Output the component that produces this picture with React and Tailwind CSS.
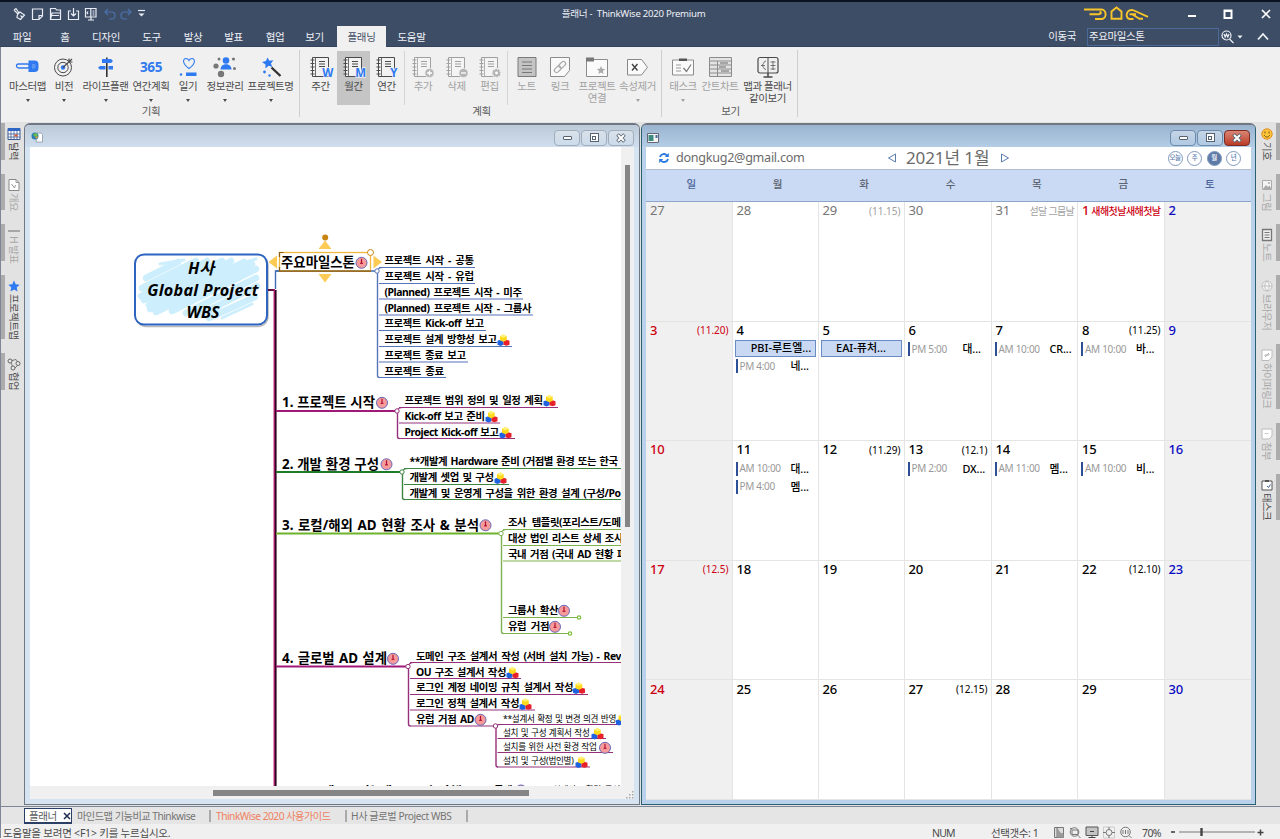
import clsx from 'clsx'

const BLUE = '#2f7af0'
const DARK = '#4a4a4a'

/* ---------- ribbon icons (all on a 28x24 canvas) ---------- */

function Icon({ children, className }) {
  return (
    <svg viewBox="0 0 28 24" className={clsx('h-6 w-7 shrink-0 overflow-visible', className)} fill="none">
      {children}
    </svg>
  )
}

function MasterMapIcon() {
  return (
    <Icon>
      <rect x="2.5" y="10" width="13" height="4" rx="2" stroke={BLUE} strokeWidth="1.3" />
      <path d="M14.500 6.500h6a4 4 0 0 1 4 4v3.500a4 4 0 0 1-4 4h-6z" fill={BLUE} />
      <path d="M18 10h2.500a1 1 0 0 1 1 1v2.500a1 1 0 0 1-1 1H18z" fill="#5a96f4" />
    </Icon>
  )
}

function VisionIcon() {
  return (
    <Icon>
      <circle cx="13" cy="13.5" r="8.500" stroke={DARK} />
      <circle cx="13" cy="13.5" r="5.200" stroke={DARK} />
      <circle cx="13" cy="13.5" r="2.200" fill={BLUE} />
      <path d="M13 13.500 22 5M19 4.500V8h3.500" stroke={DARK} strokeWidth="1.200" />
    </Icon>
  )
}

function LifePlanIcon() {
  return (
    <Icon>
      <path d="M14.800 3.500v19.500" stroke="#333" strokeWidth="1.600" />
      <path d="M10 5h9l2 2-2 2h-9zM8 12h5.500v3.500H8l-2-1.700zM16.500 12H21v3.500h-4.500z" fill={BLUE} />
    </Icon>
  )
}

function YearPlanIcon() {
  return (
    <Icon>
      <text x="14" y="17.500" textAnchor="middle" fill={BLUE} fontSize="13.500" fontWeight="700" fontFamily="Open Sans">365</text>
    </Icon>
  )
}

function DiaryIcon() {
  return (
    <Icon>
      <path d="M15 14.500C7.500 9 9 4.500 12 4.500c1.500 0 2.500 1 3 2 .5-1 1.500-2 3-2 3 0 4.500 4.500-3 10z" stroke={BLUE} strokeWidth="1.100" />
      <path d="M12 18.500h10.500V22H12z" fill={BLUE} />
      <circle cx="7" cy="20.500" r="1.200" fill={BLUE} />
    </Icon>
  )
}

function InfoIcon() {
  return (
    <Icon>
      <circle cx="15" cy="6.500" r="3.300" fill={BLUE} />
      <path d="M9.500 15.500c0-7 11-7 11 0z" fill={BLUE} />
      <g fill="#777">
        <circle cx="5" cy="12" r="2.600" />
        <circle cx="10" cy="20" r="3.200" />
        <circle cx="8" cy="5" r="1.500" />
        <circle cx="22.500" cy="5" r="1.600" />
        <circle cx="23.500" cy="14.500" r="1.500" />
      </g>
    </Icon>
  )
}

function ProjectNameIcon() {
  return (
    <Icon>
      <path d="m10.500 3.500 1.900 3.300 4-.6-2.500 3.200 1.600 3.600-3.900-1.200-3.200 2.600.1-4L5 8l3.900-1z" fill={BLUE} />
      <path d="m14.500 13.500 9 8.500" stroke="#333" strokeWidth="2.400" />
      <circle cx="7.500" cy="18" r="1.400" fill={BLUE} />
      <circle cx="12.500" cy="21.500" r="1.200" fill={BLUE} />
    </Icon>
  )
}

function NotebookIcon({ letter, badge, faded }) {
  const line = faded ? '#a0a0a0' : DARK
  return (
    <Icon>
      <path d="M5.500 3.500h16v19h-16z" stroke={line} fill={faded ? '#f4f4f4' : '#f2f2f2'} />
      <path d="M8.500 3.500v19" stroke={line} strokeWidth=".8" />
      <path d="M3.500 6h4M3.500 9.500h4M3.500 13h4M3.500 16.500h4M3.500 20h4" stroke={line} strokeWidth="1.100" />
      <path d="M12 7.500h6M12 10h6M12 12.500h6" stroke={line} />
      {letter && (
        <text x="20.500" y="23" textAnchor="middle" fill={BLUE} stroke="#f0f0f0" strokeWidth="1.500" paintOrder="stroke" fontSize="11.500" fontWeight="700" fontFamily="Open Sans">
          {letter}
        </text>
      )}
      {badge && <circle cx="20.500" cy="19" r="4.600" fill="#b4b4b4" stroke="#f0f0f0" strokeWidth=".8" />}
      {badge === 'plus' && <path d="M18 19h5M20.500 16.500v5" stroke="#fff" strokeWidth="1.300" />}
      {badge === 'minus' && <path d="M18 19h5" stroke="#fff" strokeWidth="1.300" />}
      {badge === 'gear' && (
        <>
          <circle cx="20.500" cy="19" r="4.200" stroke="#f0f0f0" strokeWidth="1.600" strokeDasharray="1.300 2" />
          <circle cx="20.500" cy="19" r="1.400" fill="#fff" />
        </>
      )}
    </Icon>
  )
}

function NoteIcon() {
  return (
    <Icon>
      <path d="M5 3.500h18v19H5z" fill="#c4c4c4" stroke="#7a7a7a" />
      <path d="M9 8h10M9 11.500h10M9 15h10M9 18.500h10" stroke="#777" />
    </Icon>
  )
}

function LinkIcon() {
  return (
    <Icon>
      <path d="M4.500 3.500h19v13l-5 6h-14z" fill="#fafafa" stroke="#8c8c8c" />
      <g stroke="#aaa" strokeWidth="1.200" transform="rotate(-45 14 13)">
        <rect x="7" y="10.800" width="7.500" height="4.400" rx="2.200" />
        <rect x="13.500" y="10.800" width="7.500" height="4.400" rx="2.200" />
      </g>
    </Icon>
  )
}

function FolderStarIcon() {
  return (
    <Icon>
      <path d="M3.500 5.500h21v17h-21z" fill="#fafafa" stroke="#8c8c8c" />
      <path d="M3 3.500h8v4H3z" fill="#777" />
      <path d="m18 12 1.200 2.800 3 .2-2.300 2 .7 3-2.600-1.600L15.400 20l.7-3-2.300-2 3-.2z" fill="#aaa" />
    </Icon>
  )
}

function RemoveTagIcon() {
  return (
    <Icon>
      <path d="M3.500 5.500h14l6 7.800-6 7.700h-14z" fill="#fafafa" stroke="#888" />
      <path d="m8 10 5.500 6.500M13.500 10 8 16.500" stroke="#444" strokeWidth="1.400" />
    </Icon>
  )
}

function TaskIcon() {
  return (
    <Icon>
      <path d="M3.500 6h21v15h-21z" fill="#fafafa" stroke="#8c8c8c" />
      <path d="M10 4.500h8V7h-8z" fill="#555" />
      <path d="M7 11h5M7 14h5M7 17h5" stroke="#999" />
      <path d="m14.500 14 3 3.500 4.500-7" stroke="#777" strokeWidth="1.200" />
    </Icon>
  )
}

function GanttIcon() {
  return (
    <Icon>
      <path d="M3.500 3.500h22v19h-22z" fill="#e4e4e4" stroke="#8c8c8c" />
      <path d="M3.500 7h22M3.500 11h22M3.500 15h22M3.500 19h22M11.500 7v15.500" stroke="#8c8c8c" />
      <path d="M14 9h8M13 13h7M15 17h8" stroke="#666" />
    </Icon>
  )
}

function MapPlannerIcon() {
  return (
    <Icon>
      <rect x="4" y="3.500" width="20" height="15.500" rx="2" stroke={DARK} strokeWidth="1.200" />
      <path d="M14 19v4M9.500 23h9" stroke={DARK} strokeWidth="1.600" />
      <path d="M14 3.500V19" stroke={DARK} />
      <path d="M12 7c-3 0-2 4.500-4.500 4.500 2.500 0 1.500 4 4.500 4M7 11.500h4M16.500 8h5M16.500 11.500h5M16.500 15h5M19 7v9" stroke="#666" strokeWidth=".9" />
    </Icon>
  )
}

/* ---------- header ---------- */

function QuickAccess() {
  return (
    <svg viewBox="0 0 140 16" className="ml-[11px] h-4 w-[140px]" fill="none" stroke="#e8edf5" strokeWidth="1.200">
      <path d="m3 4 2-1.500 3 4.500M3 4l4 4M6.500 8.500 9 6l4.500 3-4 4.500-3.500-2zM9.500 9.500l1.500 1.500" />
      <path d="M21.500 3h10v7l-3.500 3.500h-6.500zM31.500 9.500H28v4" />
      <path d="M39.500 13.500v-11h5l1 1.500h4v3M39.500 13.500l1.500-6.500h8.500v6.500zM41 9.500h7" />
      <path d="M60 5h-2.500v8.500h10V5H65M62.500 2v8M60 7.500l2.500 2.500L65 7.500" />
      <path d="M74.500 2.500h10.500v8.500H74.500zM79.800 2.500v8.500M77 5.500l-1 1.300 1 1.400M77 14h6M80 11v3M81.500 5h2M81.500 7h2M81.500 9h2" />
      <g stroke="#4a72ac">
        <path d="M97 3 94 6l3 3M94 6h6.500a3 3 0 0 1 0 7H98" />
        <path d="m117 3 3 3-3 3M120 6h-6.500a3 3 0 0 0 0 7h2.500" />
      </g>
      <path d="M127 4.500h7" />
      <path d="M127.500 7.500h6l-3 3z" fill="#e8edf5" stroke="none" />
    </svg>
  )
}

function HandsLogo() {
  return (
    <svg viewBox="0 0 66 16" className="h-4 w-[66px]" fill="none" stroke="#f7c52a" strokeWidth="1.900">
      <path d="M0 3.500h17.500c5.500 0 5.500 9.500 0 9.500H11M5.500 8.200H15c2.500 0 2.500-2.500.5-2.500" />
      <path d="M27.500 12.800V5.500l5-4 5 4v7.300z" />
      <path d="m64 10.800-14-6.300c-7-3-10 7-4.500 8.500h4M59 12.800h-3.500l-7-4.300M45.500 8.300H52" />
    </svg>
  )
}

const menus = [
  ['파일', 'w-11'],
  ['홈', 'w-[42px]'],
  ['디자인', 'w-10'],
  ['도구', 'w-[51px]'],
  ['발상', 'w-8'],
  ['발표', 'w-[49px]'],
  ['협업', 'w-[34px]'],
  ['보기', 'w-[45px]'],
  ['플래닝', 'w-[49px]'],
  ['도움말', 'w-[51px]'],
]

function Header() {
  return (
    <header className="shrink-0 border-t-2 border-[#0b1220] bg-[#3e4d66] text-[#eef1f6]">
      <div className="relative flex h-6 items-center">
        <QuickAccess />
        <div className="absolute inset-x-0 top-[4px] text-center text-[9.600px] leading-[15px] tracking-[-0.27px]">
          <span className="relative -left-[6.500px]">플래너 - &nbsp;ThinkWise 2020 Premium</span>
        </div>
        <div className="ml-auto flex items-center">
          <HandsLogo />
          <svg viewBox="0 0 90 16" className="ml-[37px] mr-[3px] h-4 w-[90px]" fill="none" stroke="#fff" strokeWidth="2">
            <path d="M1 10h8M37.500 4.500h7v7.500h-7zM36.500 5h9" />
            <path d="m75 4 8 8M83 4l-8 8" strokeWidth="1.700" />
          </svg>
        </div>
      </div>
      <div className="flex h-[21px] border-b border-[#32425d]">
        <nav className="flex text-[10.500px] tracking-[-0.3px]">
          {menus.map(([label, width]) => (
            <div
              key={label}
              className={clsx(
                width,
                'flex h-[21px] items-center justify-center pt-[2px]',
                label === '플래닝' && 'bg-[#f0f0f0] text-[#3e4d66]'
              )}
            >
              {label}
            </div>
          ))}
        </nav>
        <div className="ml-auto flex h-[21px] items-center text-[10.500px] tracking-[-0.4px]">
          <span className="pt-px">이동국</span>
          <div className="ml-[11px] flex h-[18px] w-[132px] items-center border border-[#4c6a99] pl-px pt-px">주요마일스톤</div>
          <svg viewBox="0 0 58 16" className="ml-[2px] mr-px h-4 w-[58px]" fill="none" stroke="#eef1f6" strokeWidth="1.200">
            <circle cx="5.500" cy="6.500" r="4.500" />
            <path d="m8.500 10 4 4M3 5l1.200 3 1.300-3 1.300 3L8 5" />
            <path d="M16.500 6.500h5l-2.500 3z" fill="#eef1f6" stroke="none" />
            <path d="m37 10.500 5-5.500 5 5.500" strokeWidth="1.800" />
          </svg>
        </div>
      </div>
    </header>
  )
}

/* ---------- ribbon ---------- */

function Tool({ icon, label, second, width, arrow, active, faded }) {
  return (
    <div
      className={clsx(
        width,
        'flex h-[54px] shrink-0 flex-col items-center whitespace-nowrap pt-[3px] text-[10.500px] leading-[12px] tracking-[-0.45px]',
        active && 'bg-[#c5c5c5]',
        faded ? 'text-[#a2a2a2]' : 'text-[#4b4b4b]'
      )}
    >
      {icon}
      <span className="mt-[2px]">{label}</span>
      {second && <span>{second}</span>}
      {arrow && <span className="mt-[7px] border-x-[2.500px] border-t-[3px] border-x-transparent border-t-current" />}
    </div>
  )
}

function Group({ label, children }) {
  return (
    <div className="flex flex-col border-r border-[#cfcfcf] pt-px">
      <div className="flex">{children}</div>
      <div className="-mt-px pl-[2px] text-center text-[10.500px] leading-[14px] tracking-[-0.4px] text-[#5a5a5a]">{label}</div>
    </div>
  )
}

function Divider() {
  return <div className="mx-px h-[54px] w-px bg-[#d4d4d4]" />
}

function Ribbon() {
  return (
    <div className="flex h-[75px] shrink-0 border-l border-[#7d8798] bg-[#f0f0f0] pt-[3px]">
      <div className="flex h-[67px]">
        <Group label="기획">
          <Tool icon={<MasterMapIcon />} label="마스터맵" width="ml-[5px] w-[43px]" arrow />
          <Tool icon={<VisionIcon />} label="비전" width="w-[30px]" arrow />
          <Tool icon={<LifePlanIcon />} label="라이프플랜" width="w-[53px]" arrow />
          <Tool icon={<YearPlanIcon />} label="연간계획" width="w-[38px]" arrow />
          <Tool icon={<DiaryIcon />} label="일기" width="w-9" arrow />
          <Tool icon={<InfoIcon />} label="정보관리" width="w-[38px]" arrow />
          <Tool icon={<ProjectNameIcon />} label="프로젝트명" width="mr-[2px] w-[53px]" arrow />
        </Group>
        <Group label="계획">
          <Tool icon={<NotebookIcon letter="W" />} label="주간" width="ml-1 w-[33px]" />
          <Tool icon={<NotebookIcon letter="M" />} label="월간" width="w-[33px]" active />
          <Tool icon={<NotebookIcon letter="Y" />} label="연간" width="w-[33px]" />
          <Divider />
          <Tool icon={<NotebookIcon badge="plus" faded />} label="추가" width="w-[34px]" faded />
          <Tool icon={<NotebookIcon badge="minus" faded />} label="삭제" width="w-[33px]" faded />
          <Tool icon={<NotebookIcon badge="gear" faded />} label="편집" width="w-[33px]" faded />
          <Divider />
          <Tool icon={<NoteIcon />} label="노트" width="w-[35px]" faded />
          <Tool icon={<LinkIcon />} label="링크" width="w-8" faded />
          <Tool icon={<FolderStarIcon />} label="프로젝트" second="연결" width="w-[42px]" faded />
          <Tool icon={<RemoveTagIcon />} label="속성제거" width="mr-1 w-[39px]" arrow faded />
        </Group>
        <Group label="보기">
          <Tool icon={<TaskIcon />} label="태스크" width="ml-[2px] w-[38px]" arrow faded />
          <Tool icon={<GanttIcon />} label="간트차트" width="w-9" faded />
          <Tool icon={<MapPlannerIcon />} label="맵과 플래너" second="같이보기" width="w-[59px]" />
        </Group>
      </div>
    </div>
  )
}

/* ---------- side tabs ---------- */

const sideIcons = {
  calendar: (
    <>
      <path d="M1 1.500h12v11H1z" fill="#fff" stroke="#3a5a94" />
      <path d="M1 1h12v3H1z" fill="#2f66c4" />
      <path d="M1 7h12M1 10h12M4 4v9M7 4v9M10 4v9" stroke="#3a5a94" strokeWidth=".8" />
      <path d="M7.500 7.500h3v2h-3z" fill="#e0572d" />
    </>
  ),
  page: (
    <>
      <path d="M2 1.500h7l3 3v8H2z" fill="#fff" stroke="#888" />
      <path d="M9 1.500v3h3M4.500 6l3 4 1-3" stroke="#999" />
    </>
  ),
  present: <path d="M1 2h12" stroke="#999" strokeWidth="1.600" />,
  star: <path d="m7 1.500 1.700 3.800 4 .4-3 2.800.8 4L7 10.400l-3.600 2.100.9-4-3-2.800 4-.4z" fill="#2f7af0" />,
  people: (
    <>
      <path d="M3 4 9 2.500 12 7l-5 5z" stroke="#777" />
      <circle cx="3" cy="4" r="2" fill="#e9e9e9" stroke="#666" />
      <circle cx="11" cy="6.500" r="2" fill="#e9e9e9" stroke="#666" />
      <circle cx="6" cy="11" r="2" fill="#e9e9e9" stroke="#666" />
    </>
  ),
  smile: (
    <>
      <circle cx="7" cy="7" r="5.200" fill="#ffc83a" stroke="#e08b1c" />
      <path d="M5 4.500v2M9 4.500v2M4.200 8.200c1.500 2.500 4.100 2.500 5.600 0" stroke="#7a4a10" />
    </>
  ),
  image: (
    <>
      <path d="M2.500 2.500h9v9h-9z" fill="#f4f4f4" stroke="#aaa" />
      <path d="m3 11 3-4 2 2 1.500-1.500 2 3.500z" fill="#aaa" />
      <circle cx="9" cy="5" r="1" fill="#aaa" />
    </>
  ),
  note: (
    <>
      <path d="M2.500 1.500h9v11h-9z" fill="#eee" stroke="#777" strokeWidth="1.300" />
      <path d="M4.500 4.500h5M4.500 7h5M4.500 9.500h5" stroke="#777" />
    </>
  ),
  globe: (
    <>
      <circle cx="7" cy="7" r="5" fill="#f4f4f4" stroke="#c0c0c0" />
      <path d="M2 7h10M7 2c-3 3-3 7 0 10M7 2c3 3 3 7 0 10" stroke="#c0c0c0" />
    </>
  ),
  link: (
    <>
      <path d="M2 2h10v7l-3 3.500H2z" fill="#fff" stroke="#bbb" />
      <path d="m5 9 4-4M4.500 8l2-2M7.500 8l2-2" stroke="#aaa" />
    </>
  ),
  clip: (
    <>
      <path d="M2 2h10v7l-3 3H2z" fill="#fff" stroke="#bbb" />
      <path d="M4.500 6.500h4" stroke="#ccc" />
    </>
  ),
  task: (
    <>
      <path d="M2 3h10v9H2z" fill="#fff" stroke="#555" />
      <path d="M5 2h4v2H5z" fill="#555" />
      <path d="m7 8 1.500 1.500 2-3" stroke="#3a5a94" />
    </>
  ),
}

const leftTabs = [
  { label: '달력', icon: 'calendar', height: 'h-[37px]' },
  { label: '개요', icon: 'page', height: 'h-9', faded: true },
  { label: 'H 발표', icon: 'present', height: 'h-[37px]', faded: true, tight: true },
  { label: '프로젝트맵', icon: 'star', height: 'h-16' },
  { label: '협업', icon: 'people', height: 'h-[37px]' },
]

const rightTabs = [
  { label: '기호', icon: 'smile', height: 'h-[37px]' },
  { label: '그림', icon: 'image', height: 'h-9', faded: true },
  { label: '노트', icon: 'note', height: 'h-[37px]', faded: true },
  { label: '브라우저', icon: 'globe', height: 'h-[55px]', faded: true },
  { label: '하이퍼링크', icon: 'link', height: 'h-[65px]', faded: true },
  { label: '첨부', icon: 'clip', height: 'h-[37px]', faded: true },
  { label: '태스크', icon: 'task', height: 'h-[46px]' },
]

function SideTabs({ tabs, right }) {
  return (
    <aside
      className={clsx(
        'flex w-[23px] shrink-0 flex-col gap-[14px] bg-[#e2e2e2] pt-px',
        !right && 'border-l border-[#7d8798]'
      )}
    >
      {tabs.map((t) => (
        <div key={t.label} className={clsx('flex', t.height, right && 'flex-row-reverse')}>
          <div className="w-1 shrink-0 bg-[#acacac]" />
          <div
            className={clsx(
              'flex grow flex-col items-center whitespace-nowrap pt-1 text-[10.500px] leading-[14px] tracking-[-0.6px]',
              t.faded ? 'text-[#a8a8a8]' : 'text-[#4b4b4b]'
            )}
          >
            <svg viewBox="0 0 14 14" className={clsx('h-[14px] w-[14px] shrink-0', t.tight && '-mb-2 mt-px')} fill="none">
              {sideIcons[t.icon]}
            </svg>
            <span className="mt-px [text-orientation:sideways] [writing-mode:vertical-rl]">{t.label}</span>
          </div>
        </div>
      ))}
    </aside>
  )
}

/* ---------- windows ---------- */

function WindowButtons({ active }) {
  const edge = active ? 'border-[#6d8cad]' : 'border-[#9fadbd]'
  return (
    <div className="flex h-4 gap-px">
      <span className={clsx('flex w-[26px] items-center justify-center rounded-sm border bg-gradient-to-b from-white/40 to-transparent', edge)}>
        <span className="mt-px h-[4px] w-[9px] rounded-[1px] border border-[#56626f] bg-white" />
      </span>
      <span className={clsx('flex w-[26px] items-center justify-center rounded-sm border bg-gradient-to-b from-white/40 to-transparent', edge)}>
        <span className="flex size-[9px] items-center justify-center border border-[#56626f] bg-white">
          <span className="size-[4px] border border-[#56626f]" />
        </span>
      </span>
      <span
        className={clsx(
          'flex w-[26px] items-center justify-center rounded-sm border',
          active ? 'border-[#7d2a22] bg-gradient-to-b from-[#d98574] to-[#b93a24]' : 'border-[#9fadbd] bg-gradient-to-b from-white/40 to-transparent'
        )}
      >
        <svg viewBox="0 0 10 10" className="size-[10px]">
          <path d="m1.500 1.500 7 7M8.500 1.500l-7 7" stroke="#56626f" strokeWidth="3.600" />
          <path d="m2 2 6 6M8 2 2 8" stroke="#fff" strokeWidth="2" />
        </svg>
      </span>
    </div>
  )
}

/* ---------- mind map ---------- */

// visible corner of the map on the canvas
const OX = 30
const OY = 147

const MAGENTA = '#96307c'
const GREEN = '#3c8540'
const LIME = '#7fb24f'
const NAVY = '#5674b8'

// x / y = left edge and vertical centre, w = text width, end = where the underline stops
const branches = [
  {
    title: { text: '주요마일스톤', x: 281, y: 262, w: 75, clock: 361.5 },
    color: NAVY, main: '#3f6ab8', join: [377, 271], ty: 271,
    nodes: [
      { text: '프로젝트 시작 - 공통', x: 384.5, y: 259.5, w: 89, line: 267.5, end: 475 },
      { text: '프로젝트 시작 - 유럽', x: 384.5, y: 275.5, w: 89, line: 283.5, end: 475 },
      { text: '(Planned) 프로젝트 시작 - 미주', x: 384.5, y: 291.5, w: 137, line: 299, end: 523 },
      { text: '(Planned) 프로젝트 시작 - 그룹사', x: 384.5, y: 307.5, w: 146.5, line: 315, end: 533 },
      { text: '프로젝트 Kick-off 보고', x: 384.5, y: 323, w: 99, line: 330.5, end: 486 },
      { text: '프로젝트 설계 방향성 보고', x: 384.5, y: 339, w: 112, line: 346.5, end: 512, cubes: 503.5 },
      { text: '프로젝트 종료 보고', x: 384.5, y: 354.5, w: 81, line: 362, end: 468 },
      { text: '프로젝트 종료', x: 384.5, y: 370.5, w: 59, line: 377.5, end: 446 },
    ],
  },
  {
    title: { text: '1. 프로젝트 시작', x: 282, y: 402, w: 93, clock: 382 },
    color: MAGENTA, main: '#a01878', join: [397, 411], ty: 411,
    nodes: [
      { text: '프로젝트 범위 정의 및 일정 계획', x: 404.5, y: 399.5, w: 138, line: 407.5, end: 558, cubes: 549.5 },
      { text: 'Kick-off 보고 준비', x: 404.5, y: 415.5, w: 80, line: 423, end: 500, cubes: 491.5 },
      { text: 'Project Kick-off 보고', x: 404.5, y: 431.5, w: 94, line: 438.5, end: 515, cubes: 505.5 },
    ],
  },
  {
    title: { text: '2. 개발 환경 구성', x: 282, y: 463.5, w: 97, clock: 386.5 },
    color: GREEN, main: '#1f7a2a', join: [402, 472], ty: 472,
    nodes: [
      { text: '**개발계 Hardware 준비 (거점별 환경 또는 한국', x: 409.5, y: 461, w: 208, line: 468.5, end: 622 },
      { text: '개발계 셋업 및 구성', x: 409.5, y: 477, w: 84, line: 484.5, end: 509, cubes: 500.5 },
      { text: '개발계 및 운영계 구성을 위한 환경 설계 (구성/Po', x: 409.5, y: 492.5, w: 211, line: 499.5, end: 622 },
    ],
  },
  {
    title: { text: '3. 로컬/해외 AD 현황 조사 & 분석', x: 282, y: 524.5, w: 197, clock: 485.5 },
    color: LIME, main: '#6fb22c', join: [501, 533.5], ty: 533.5,
    nodes: [
      { text: '조사 템플릿(포리스트/도메', x: 508, y: 522, w: 112.5, line: 529.5, end: 622 },
      { text: '대상 법인 리스트 상세 조사', x: 508, y: 538, w: 115, line: 545.5, end: 622 },
      { text: '국내 거점 (국내 AD 현황 파', x: 508, y: 554, w: 118, line: 561, end: 622 },
      { text: '그룹사 확산', x: 508, y: 610, w: 50, line: 617.5, end: 577, clock: 564, tip: true },
      { text: '유럽 거점', x: 508, y: 626, w: 41, line: 633.5, end: 568, clock: 555, tip: true },
    ],
  },
  {
    title: { text: '4. 글로벌 AD 설계', x: 282, y: 658, w: 105, clock: 393 },
    color: MAGENTA, main: '#a01878', join: [408, 666.5], ty: 666.5,
    nodes: [
      { text: '도메인 구조 설계서 작성 (서버 설치 가능) - Rev', x: 416, y: 656, w: 205, line: 662.5, end: 622 },
      { text: 'OU 구조 설계서 작성', x: 416, y: 671.5, w: 90, line: 678.5, end: 521, cubes: 512.5 },
      { text: '로그인 계정 네이밍 규칙 설계서 작성', x: 416, y: 687, w: 157, line: 694.5, end: 588, cubes: 579 },
      { text: '로그인 정책 설계서 작성', x: 416, y: 703, w: 103, line: 710, end: 535, cubes: 525.5 },
      { text: '유럽 거점 AD', x: 416, y: 719, w: 58, line: 726, end: 495, clock: 480.5 },
    ],
  },
  {
    color: MAGENTA, join: [495.5, 726],
    small: true,
    nodes: [
      { text: '**설계서 확정 및 변경 의견 반영', x: 503, y: 718.5, w: 113, line: 724.5, end: 622, cubes: 622 },
      { text: '설치 및 구성 계획서 작성', x: 503, y: 732.5, w: 86.5, line: 738.5, end: 606, cubes: 597.5 },
      { text: '설치를 위한 사전 환경 작업', x: 503, y: 747, w: 93.5, line: 752.5, end: 613, clock: 605 },
      { text: '설치 및 구성(법인별)', x: 503, y: 761, w: 70.5, line: 767, end: 590, cubes: 581.5 },
    ],
  },
]

function Clock({ x, y }) {
  return (
    <g transform={`translate(${x} ${y})`}>
      <circle r="5.500" fill="#f79a9a" stroke="#6668b8" strokeWidth="1" />
      <path d="M0-4V1" stroke="#b01030" strokeWidth="1.200" />
      <path d="M-1.500.5h3" stroke="#b01030" strokeWidth="1" />
    </g>
  )
}

function Cubes({ x, y }) {
  return (
    <g transform={`translate(${x} ${y})`}>
      <path d="m-6 .5 3-1 3 1v4l-3 1.200-3-1.200z" fill="#1f62e0" />
      <path d="m0 .5 3-1 3 1v4l-3 1-3-1z" fill="#e8202a" />
      <path d="m-3.500-4 3.300-1.800L3.200-4v4L-.2 1.500-3.500 0z" fill="#ffd91c" />
      <path d="m-3.500-4 3.300-1.800L3.200-4-.2-2.600z" fill="#fff27a" />
    </g>
  )
}

function MapText({ node, size }) {
  return (
    <span
      className={clsx(
        'absolute -translate-y-1/2 whitespace-nowrap [text-align-last:justify]',
        size === 'title' && 'text-[13.400px] font-bold leading-4',
        size === 'node' && 'text-[10.400px] font-bold leading-[14px] tracking-[-0.46px]',
        size === 'small' && 'text-[8.600px] leading-3 tracking-[-0.3px]'
      )}
      style={{ left: node.x - OX, top: node.y - OY, width: node.w }}
    >
      {node.text}
    </span>
  )
}

function Branch({ b }) {
  const [jx, jy] = b.join
  const last = b.nodes[b.nodes.length - 1]
  const first = b.nodes[0]
  return (
    <g fill="none" stroke={b.color} strokeWidth="1.200">
      {b.title && <path d={`M276 ${b.ty}H${jx - 2}`} stroke={b.main} strokeWidth={b.color === NAVY ? 1.4 : 2} />}
      <path d={`M${jx} ${jy}Q${jx + 1} ${first.line} ${jx + 6} ${first.line}`} />
      <path d={`M${jx + 0.5} ${jy}V${last.line - 2}q0 2 2 2`} strokeWidth="1.400" />
      {b.nodes.map((n) => (
        <path key={n.line} d={`M${jx + 2} ${n.line}H${n.end}`} />
      ))}
      {b.nodes.filter((n) => n.tip).map((n) => (
        <circle key={n.line} cx={n.end + 2} cy={n.line} r="1.700" fill="#fff" stroke="#7cc03a" />
      ))}
      <circle cx={jx} cy={jy} r="2.200" fill="#fff" strokeWidth="1" />
    </g>
  )
}

function Scribble() {
  return (
    <g stroke="#cdeefc" fill="none" strokeLinecap="round">
      <path d="M146 278l32-16M142 288l54-27M141 296l66-35M144 300l78-39M149 305l82-44M150 309l94-47M156 312l96-48M172 311l84-42M186 313l70-35M199 315l58-29M209 318l46-21" strokeWidth="6.500" />
      <path d="M160 264l24-4M196 317l22-8M222 318l30-14M240 264l16-5" strokeWidth="3" />
    </g>
  )
}

function MindMap() {
  return (
    <div className="relative h-[639px] w-[591px] overflow-hidden bg-white text-black">
      <svg viewBox="30 147 591 639" className="absolute inset-0 h-full w-full">
        <rect x="136" y="256" width="132" height="70.500" rx="10" fill="none" stroke="#b9b9b9" strokeWidth="1.500" />
        <rect x="135" y="254.500" width="132" height="70" rx="9" fill="#fff" stroke="#2c64c0" strokeWidth="2" />
        <Scribble />
        <path d="M275.500 289V271h4" fill="none" stroke="#3f6ab8" strokeWidth="1.400" />
        <path d="M268 290h7" stroke="#5a1040" strokeWidth="2" />
        <path d="M274.300 289v500" stroke="#b82078" strokeWidth="1.500" />
        <path d="M275.700 290v499" stroke="#30061f" strokeWidth="1.800" />
        {branches.map((b) => (
          <Branch key={b.join.join()} b={b} />
        ))}
        {/* selection frame with its four add handles */}
        <rect x="279.500" y="252.500" width="91" height="18.500" fill="none" stroke="#f0b840" strokeWidth="1.300" />
        <path d="M279.500 257v-4.500h4M279 271.200h92M279.500 271v-4" fill="none" stroke="#8a5a10" strokeWidth="1.200" />
        <g fill="#fccb55">
          <path d="m325 240.500 6.500 8.500h-13zM325 282.500l6.500-8.500h-13zM268.500 262l8.500-6.500v13zM382 262l-8.500-6.500v13z" />
        </g>
        <circle cx="325.200" cy="237.500" r="3" fill="#c88410" />
        <circle cx="370.500" cy="252.500" r="3" fill="#fff" stroke="#c88410" />
      </svg>
      <div className="absolute left-[103px] top-[110px] w-[140px] text-center text-[16.200px] font-bold italic leading-[22px]">
        <span className="block pr-[4px]">H사</span>
        <span className="tracking-[0.25px]">Global Project</span>
        <br />
        WBS
      </div>
      {branches.map((b) => (
        <div key={b.join.join()}>
          {b.title && <MapText node={b.title} size="title" />}
          {b.nodes.map((n) => (
            <MapText key={n.text} node={n} size={b.small ? 'small' : 'node'} />
          ))}
        </div>
      ))}
      <MapText node={{ text: '5. 프로젝트 종합 테스트 및 이행', x: 282, y: 792, w: 180 }} size="title" />
      <MapText node={{ text: '국내', x: 494, y: 790, w: 18 }} size="node" />
      <MapText node={{ text: '**설계서 - 환경 구성', x: 544, y: 789.5, w: 76 }} size="small" />
      <svg viewBox="30 147 591 639" className="absolute inset-0 h-full w-full">
        {branches.flatMap((b) => [b.title, ...b.nodes]).map(
          (n) => n?.clock && <Clock key={n.text} x={n.clock} y={n.y + 0.8} />
        )}
        {branches.flatMap((b) => b.nodes).map(
          (n) => n.cubes && <Cubes key={n.text} x={n.cubes} y={n.y + 1.3} />
        )}
        <Clock x={521} y={790.5} />
      </svg>
    </div>
  )
}

function MapWindow() {
  return (
    <section className="flex w-[616px] shrink-0 flex-col rounded-t-md border border-t-2 border-[#6f7782] bg-[#d6e4f2] pb-[5px] pl-[5px] pr-[5px]">
      <div className="-mx-[5px] flex h-[22px] items-center justify-between rounded-t bg-gradient-to-b from-[#bdcad8] to-[#cfdeee] pl-[6px] pr-[5px] pt-[3px]">
        <svg viewBox="0 0 12 12" className="-mt-px size-3">
          <path d="M6 2h4l1.500 1.500V11H5z" fill="#fff" stroke="#8c98a8" strokeWidth=".8" />
          <circle cx="4" cy="5" r="3.500" fill="#2b7fb5" />
          <path d="M2 3.500 5 2l2 2-3 2z" fill="#6cc04a" />
          <path d="m4 6 3-1-1 3z" fill="#e8a020" />
        </svg>
        <WindowButtons />
      </div>
      <div className="flex">
        <MindMap />
        <div className="flex grow justify-center bg-[#f0f0f0] pt-[18px]">
          <div className="h-[362px] w-[5px] bg-[#858585]" />
        </div>
      </div>
      <div className="flex grow items-start bg-[#f0f0f0] pt-1">
        <div className="ml-[183px] h-[6px] w-[316px] bg-[#858585]" />
        <svg viewBox="0 0 8 8" className="ml-auto mt-px size-[8px]" fill="#a8a8a8">
          <path d="M6 0h1.500v1.500H6zM6 3h1.500v1.500H6zM3 3h1.500v1.500H3zM6 6h1.500v1.500H6zM3 6h1.500v1.500H3zM0 6h1.500v1.500H0z" />
        </svg>
      </div>
    </section>
  )
}

/* ---------- calendar ---------- */

const days = [
  { d: 27, muted: true }, { d: 28, muted: true }, { d: 29, muted: true, note: '(11.15)' }, { d: 30, muted: true },
  { d: 31, muted: true, note: '섣달 그믐날' }, { d: 1, holiday: true, note: '새해첫날새해첫날' }, { d: 2 },

  { d: 3, note: '(11.20)' },
  { d: 4, chip: 'PBI-루트엘...', shift: true, events: [['PM 4:00', '네...']] },
  { d: 5, chip: 'EAI-퓨처...' },
  { d: 6, events: [['PM 5:00', '대...']] },
  { d: 7, events: [['AM 10:00', 'CR...']] },
  { d: 8, note: '(11.25)', events: [['AM 10:00', '바...']] },
  { d: 9 },

  { d: 10 },
  { d: 11, events: [['AM 10:00', '대...'], ['PM 4:00', '멤...']] },
  { d: 12, note: '(11.29)' },
  { d: 13, note: '(12.1)', events: [['PM 2:00', 'DX...']] },
  { d: 14, events: [['AM 11:00', '멤...']] },
  { d: 15, events: [['AM 10:00', '비...']] },
  { d: 16 },

  { d: 17, note: '(12.5)' }, { d: 18 }, { d: 19 }, { d: 20 }, { d: 21 }, { d: 22, note: '(12.10)' }, { d: 23 },
  { d: 24 }, { d: 25 }, { d: 26 }, { d: 27, note: '(12.15)' }, { d: 28 }, { d: 29 }, { d: 30 },
]

function dayColor(day, col) {
  if (day.muted) return 'text-[#757575]'
  if (day.holiday || col === 0) return 'text-[#cc0010]'
  if (col === 6) return 'text-[#0a0ac0]'
  return 'text-black'
}

function Day({ day, col }) {
  const weekend = col === 0 || col === 6
  return (
    <div
      className={clsx(
        'min-w-0 overflow-hidden border-b border-[#e4e4e4]',
        weekend ? 'bg-[#f0f0f0]' : 'bg-white',
        col < 6 && 'border-r'
      )}
    >
      <div className={clsx('flex h-[18px] items-center justify-between pl-1 pr-[3px] text-[13px] tracking-[-0.3px]', dayColor(day, col))}>
        <span className={clsx(!day.muted && 'font-medium')}>{day.d}</span>
        {day.note && (
          <span
            className={clsx(
              'whitespace-nowrap text-[10px]',
              day.muted && 'text-[#a0a0a0]',
              day.d === 31 && 'tracking-[-0.7px]',
              day.holiday && 'font-medium tracking-[-0.55px]',
              !day.holiday && day.d !== 31 && 'tracking-normal'
            )}
          >
            {day.note}
          </span>
        )}
      </div>
      {day.chip && (
        <div
          className={clsx(
            'ml-[2px] mr-[2px] flex h-[17px] items-center justify-center whitespace-nowrap border border-[#6a8cc4] bg-[#c9d9f4] text-[11px] font-medium text-black',
            day.shift && 'pl-3'
          )}
        >
          {day.chip}
        </div>
      )}
      {day.events?.map(([time, title]) => (
        <div key={time} className="ml-[3px] mt-px flex h-[17px] items-center whitespace-nowrap text-[10.800px]">
          <span className="h-[14px] w-[2px] bg-[#2c4f96]" />
          <span className="w-[53px] pl-[2px] text-[10px] tracking-[-0.3px] text-[#999]">{time}</span>
          <span className="font-medium tracking-[-0.1px] text-black">{title}</span>
        </div>
      ))}
    </div>
  )
}

function CalendarHeader() {
  return (
    <div className="flex h-[22px] shrink-0 items-center bg-white text-[#6b6b6b]">
      <svg viewBox="0 0 12 12" className="ml-3 size-3" fill="none" stroke="#2777dd" strokeWidth="1.800">
        <path d="M2 5a4 4 0 0 1 7-1.500M10 7a4 4 0 0 1-7 1.500" />
        <path d="M10.800 1v4h-4zM1.200 11V7h4z" fill="#2777dd" stroke="none" />
      </svg>
      <span className="ml-[6px] w-[129px] text-[12.600px] tracking-[-0.28px]">dongkug2@gmail.com</span>
      <svg viewBox="0 0 10 10" className="ml-[82px] size-[10px]" fill="none" stroke="#5a7cae">
        <path d="M8.500 1v8L1.500 5z" />
      </svg>
      <span className="ml-[9px] w-[84px] whitespace-nowrap text-[17px] tracking-[-0.1px]">2021년 1월</span>
      <svg viewBox="0 0 10 10" className="ml-[10px] size-[10px]" fill="none" stroke="#5a7cae">
        <path d="M1.500 1v8l7-4z" />
      </svg>
      <div className="ml-auto mr-[10px] flex gap-[4.500px] pt-px text-[6.500px] font-medium leading-none text-[#5a7cae]">
        {['오늘', '주', '월', '년'].map((v) => (
          <span
            key={v}
            className={clsx(
              'flex size-[15px] items-center justify-center rounded-full border border-[#8299bd] tracking-[-0.5px]',
              v === '월' && 'bg-[#5e7ba8] text-white'
            )}
          >
            {v}
          </span>
        ))}
      </div>
    </div>
  )
}

function CalendarWindow() {
  return (
    <section className="ml-px flex w-[615px] shrink-0 flex-col rounded-t-md border border-t-2 border-[#2a6070] border-t-[#6f7782] bg-[#b9d1ea] px-1 pb-1">
      <div className="-mx-1 flex h-[22px] shrink-0 items-center justify-between rounded-t bg-gradient-to-b from-[#9ab4d0] to-[#b4cde6] pl-[5px] pr-[5px] pt-[3px]">
        <svg viewBox="0 0 12 10" className="h-[10px] w-3">
          <path d="M.500.500h11v9H.500z" fill="#f4f4f4" stroke="#667" />
          <path d="M1.500 2h5v6h-5z" fill="#3c8a80" />
          <path d="M8.500 2h2v3h-2z" fill="#4a6a9a" />
        </svg>
        <WindowButtons active />
      </div>
      <CalendarHeader />
      <div className="grid h-[33px] shrink-0 grid-cols-7 items-center border-b border-t border-b-[#8fa6cb] border-t-[#b4bccb] bg-[#cad9f4] pb-px text-center text-[10.500px] font-medium text-[#5c6470]">
        {['일', '월', '화', '수', '목', '금', '토'].map((w, i) => (
          <span key={w} className={clsx('pl-1', (i === 0 || i === 6) && 'text-[#4c6699]')}>
            {w}
          </span>
        ))}
      </div>
      <div className="grid grow grid-cols-[86.500px_86px_86px_87px_86.500px_86.500px_1fr] grid-rows-5">
        {days.map((day, i) => (
          <Day key={i} day={day} col={i % 7} />
        ))}
      </div>
    </section>
  )
}

/* ---------- bottom bars ---------- */

function DocTabs() {
  return (
    <div className="flex h-[18px] shrink-0 items-center border-l border-t border-[#7d8798] bg-[#e5e5e5] text-[10.200px] text-[#747474]">
      <div className="ml-[23px] flex h-4 w-[48px] items-center border border-b-2 border-[#2c3f66] bg-white pl-1 text-[10.500px] leading-[12px] tracking-[-0.45px] text-[#5a5a5a]">
        <span className="pt-[2px]">플래너</span>
        <svg viewBox="0 0 8 8" className="ml-[6px] mt-px size-2" stroke="#1e2c4c" strokeWidth="1.500">
          <path d="m1 1 6 6M7 1 1 7" />
        </svg>
      </div>
      <span className="ml-[5px] w-[134px] whitespace-nowrap border-r-2 border-[#aaa] leading-3 tracking-[-0.5px]">마인드맵 기능비교 Thinkwise</span>
      <span className="ml-[5px] w-[131px] whitespace-nowrap border-r-2 border-[#aaa] leading-3 tracking-[-0.5px] text-[#f08060]">ThinkWise 2020 사용가이드</span>
      <span className="ml-1 w-[117px] whitespace-nowrap border-r-2 border-[#aaa] leading-3 tracking-[-0.42px]">H사 글로벌 Project WBS</span>
    </div>
  )
}

function StatusBar() {
  return (
    <div className="flex h-[14px] shrink-0 items-start whitespace-nowrap border-l border-[#7d8798] bg-[#f0f0f0] pt-[2px] text-[10.500px] leading-[14px] text-[#4b4b4b]">
      <span className="ml-[2px] w-[929px] tracking-[-0.22px]">도움말을 보려면 &lt;F1&gt; 키를 누르십시오.</span>
      <span className="w-[59px] tracking-[-0.8px]">NUM</span>
      <span className="w-[61px] tracking-[-0.4px]">선택갯수: 1</span>
      <svg viewBox="0 0 82 14" className="h-[14px] w-[82px]" fill="none" stroke="#777">
        <path d="M2.500 1.500h9v10h-9z" fill="#ddd" />
        <path d="M5 2v9M5 2l3 5 3 1v3H5z" fill="#999" stroke="#999" />
        <circle cx="22.500" cy="6" r="4.300" />
        <path d="M20 4h6v4.500h-6zM25.500 9l3 3M18 2.500h2" />
        <path d="M34 1h12v8.500H34z" fill="#c4c4c4" stroke="#555" />
        <path d="M38 5.500h4M40 9.500V11.500M36.500 11.500h7" stroke="#444" />
        <path d="M51.500 1h11v11h-11z" stroke="#ccc" />
        <circle cx="57" cy="6.500" r="3" />
        <path d="M57 1v2.500M57 9.500V12M51 6.500h3M60 6.500h3" />
        <circle cx="73.500" cy="6" r="4.800" />
        <path d="M71 4v4M73.500 4v4M76 4v4M77 9.500l2.500 2.500" />
      </svg>
      <span className="ml-2 w-[27px] tracking-[-0.6px]">70%</span>
      <svg viewBox="0 0 98 12" className="h-3 w-[98px] overflow-visible" stroke="#444" fill="none">
        <path d="M2 6h4" strokeWidth="1.600" />
        <path d="M10 6h76" stroke="#777" strokeWidth="1.200" />
        <path d="M32.500 2v8" strokeWidth="2.400" />
        <path d="M88.500 6.500h6M91.500 3.500v6" strokeWidth="1.500" />
      </svg>
    </div>
  )
}

export default function App() {
  return (
    <div className="flex h-[839px] w-[1280px] flex-col overflow-hidden bg-[#f0f0f0] font-['Noto_Sans','Noto_Sans_CJK_KR',sans-serif]">
      <Header />
      <Ribbon />
      <main className="flex h-[684px] shrink-0 bg-[#e2e2e2]">
        <SideTabs tabs={leftTabs} />
        <div className="ml-px flex h-[683px] pt-px">
          <MapWindow />
          <CalendarWindow />
        </div>
        <div className="ml-auto flex">
          <SideTabs tabs={rightTabs} right />
        </div>
      </main>
      <DocTabs />
      <StatusBar />
    </div>
  )
}
